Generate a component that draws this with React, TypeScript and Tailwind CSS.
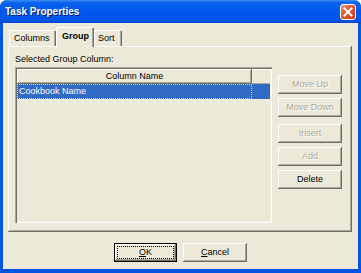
import React from 'react';

const raised =
  'shadow-[inset_-1px_-1px_#716F64,inset_1px_1px_#FFFFFF,inset_-2px_-2px_#ACA899]';

function Btn({ label, disabled = false }: { label: string; disabled?: boolean }) {
  return (
    <div
      className={`w-[64px] h-[19px] flex items-center justify-center bg-[#ECE9D8] ${raised} ${
        disabled ? 'text-[#ACA899] [text-shadow:1px_1px_#FFFFFF]' : 'text-black'
      }`}
    >
      {label}
    </div>
  );
}

export default function App() {
  return (
    <div className="w-[361px] h-[273px] bg-white font-['Liberation_Sans',Arial,sans-serif] text-[9px] leading-[11px] text-black select-none">
      <div className="w-full h-full flex flex-col bg-[#0054E3] rounded-t-[7px] overflow-hidden">
        {/* Title bar */}
        <div className="h-[23px] flex items-center justify-between pl-[5px] pr-[5px] bg-[linear-gradient(180deg,#3D8DF6_0%,#0A62EC_12%,#0058EE_45%,#0055EA_85%,#0046D5_100%)]">
          <span className="text-white font-bold text-[10px] [text-shadow:1px_1px_#0A1D6F]">
            Task Properties
          </span>
          <div className="w-[16px] h-[16px] rounded-[3px] border border-white bg-[linear-gradient(135deg,#F09A7C_0%,#E25A2F_40%,#C93A12_100%)] flex items-center justify-center">
            <svg width="10" height="10" viewBox="0 0 10 10">
              <path d="M1.5 1.5 L8.5 8.5 M8.5 1.5 L1.5 8.5" stroke="white" strokeWidth="2" strokeLinecap="square" />
            </svg>
          </div>
        </div>

        {/* Body */}
        <div className="flex-1 mx-[3px] mb-[4px] bg-[#ECE9D8] flex flex-col pt-[4px]">
          {/* Tabs */}
          <div className="h-[19px] flex items-end ml-[6px]">
            <div className="w-[47px] h-[16px] rounded-t-[2px] shadow-[inset_1px_1px_#FFFFFF,inset_-1px_0_#716F64,inset_-2px_0_#ACA899] pl-[5px] pt-[3px]">
              Columns
            </div>
            <div className="relative z-10 w-[38px] h-[20px] -mb-[1px] rounded-t-[2px] bg-[#ECE9D8] shadow-[inset_1px_1px_#FFFFFF,inset_-1px_0_#716F64,inset_-2px_0_#ACA899] pl-[6px] pt-[4px] font-bold">
              Group
            </div>
            <div className="w-[28px] h-[16px] rounded-t-[2px] shadow-[inset_1px_1px_#FFFFFF,inset_-1px_0_#716F64,inset_-2px_0_#ACA899] pl-[4px] pt-[3px]">
              Sort
            </div>
          </div>

          {/* Tab panel */}
          <div className={`ml-[5px] w-[344px] h-[186px] flex ${raised}`}>
            <div className="pl-[7px] pt-[8px] flex flex-col">
              <div>Selected Group Column:</div>
              <div className="mt-[2px] w-[257px] h-[156px] p-[2px] shadow-[inset_1px_1px_#ACA899,inset_2px_2px_#716F64,inset_-1px_-1px_#FFFFFF,inset_-2px_-2px_#F1EFE2] flex flex-col">
                <div className="h-[15px] flex">
                  <div className={`w-[235px] h-full flex items-center justify-center ${raised}`}>
                    Column Name
                  </div>
                  <div className="flex-1 h-full shadow-[inset_0_1px_#FFFFFF,inset_0_-1px_#ACA899]" />
                </div>
                <div className="h-[15px] bg-[#316AC5] flex">
                  <div className="w-[235px] h-full border border-dotted border-[#C8D6F0] pl-[1px] flex items-center text-white">
                    Cookbook Name
                  </div>
                </div>
              </div>
            </div>
            <div className="ml-[6px] pt-[29px] flex flex-col">
              <Btn label="Move Up" disabled />
              <div className="mt-[4px]">
                <Btn label="Move Down" disabled />
              </div>
              <div className="mt-[7px]">
                <Btn label="Insert" disabled />
              </div>
              <div className="mt-[4px]">
                <Btn label="Add" disabled />
              </div>
              <div className="mt-[4px]">
                <Btn label="Delete" />
              </div>
            </div>
          </div>

          {/* Dialog buttons */}
          <div className="mt-[11px] flex justify-center gap-[6px]">
            <div className="w-[63px] h-[19px] bg-[#ECE9D8] border border-black shadow-[inset_-1px_-1px_#716F64,inset_1px_1px_#FFFFFF,inset_-2px_-2px_#ACA899] p-[2px]">
              <div className="w-full h-full border border-dotted border-black flex items-center justify-center">
                <span>
                  <span className="underline">O</span>K
                </span>
              </div>
            </div>
            <div className={`w-[64px] h-[19px] bg-[#ECE9D8] flex items-center justify-center ${raised}`}>
              <span>
                <span className="underline">C</span>ancel
              </span>
            </div>
          </div>
        </div>
      </div>
    </div>
  );
}
